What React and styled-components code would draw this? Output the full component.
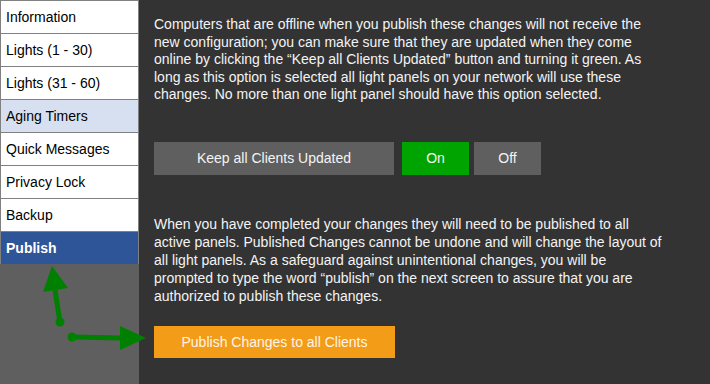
import styled, { createGlobalStyle } from "styled-components";

const GlobalStyle = createGlobalStyle`
    html, body {
        margin: 0;
        padding: 0;
        background: #333333;
    }
    #root {
        width: 710px;
        height: 384px;
    }
`;

const menu = [
    { label: "Information" },
    { label: "Lights (1 - 30)" },
    { label: "Lights (31 - 60)" },
    { label: "Aging Timers", hover: true },
    { label: "Quick Messages" },
    { label: "Privacy Lock" },
    { label: "Backup" },
    { label: "Publish", active: true },
];

const intro = [
    "Computers that are offline when you publish these changes will not receive the",
    "new configuration; you can make sure that they are updated when they come",
    "online by clicking the \u201CKeep all Clients Updated\u201D button and turning it green. As",
    "long as this option is selected all light panels on your network will use these",
    "changes. No more than one light panel should have this option selected.",
];

const warning = [
    "When you have completed your changes they will need to be published to all",
    "active panels. Published Changes cannot be undone and will change the layout of",
    "all light panels. As a safeguard against unintentional changes, you will be",
    "prompted to type the word \u201Cpublish\u201D on the next screen to assure that you are",
    "authorized to publish these changes.",
];

export default function App() {
    return (
        <>
            <GlobalStyle />
            <SCPage>
                <SCSidebar>
                    {menu.map((item) => (
                        <SCMenuItem key={item.label} $hover={item.hover} $active={item.active}>
                            {item.label}
                        </SCMenuItem>
                    ))}
                </SCSidebar>
                <SCMain>
                    <SCText $lh="17.5px">
                        {intro.map((line) => (
                            <span key={line}>{line}</span>
                        ))}
                    </SCText>
                    <SCButtonRow>
                        <SCButton $w="240px">Keep all Clients Updated</SCButton>
                        <SCButton $w="67px" $bg="#00a400" $ml="8px">On</SCButton>
                        <SCButton $w="67px" $ml="5px">Off</SCButton>
                    </SCButtonRow>
                    <SCText $lh="18px" $mt="40px">
                        {warning.map((line) => (
                            <span key={line}>{line}</span>
                        ))}
                    </SCText>
                    <SCPublishButton>Publish Changes to all Clients</SCPublishButton>
                </SCMain>
                <SCArrows width="160" height="110" viewBox="0 0 160 110">
                    <line x1="60" y1="62" x2="55" y2="30" stroke="#008000" strokeWidth="5" />
                    <circle cx="60" cy="62" r="4.5" fill="#008000" />
                    <polygon points="52,6 43,32 68,28" fill="#008000" />
                    <line x1="72" y1="77" x2="122" y2="78" stroke="#008000" strokeWidth="5" />
                    <circle cx="72" cy="77" r="4.5" fill="#008000" />
                    <polygon points="146,78 120,66 120,90" fill="#008000" />
                </SCArrows>
            </SCPage>
        </>
    );
}

const SCPage = styled.div`
    position: relative;
    display: flex;
    width: 710px;
    height: 384px;
    background: #333333;
    font-family: "Liberation Sans", Arial, sans-serif;
    overflow: hidden;
`;

const SCSidebar = styled.div`
    display: flex;
    flex-direction: column;
    width: 139px;
    flex-shrink: 0;
    height: 100%;
    background: #5f5f5f;
    box-sizing: border-box;
`;

const SCMenuItem = styled.div`
    height: 33px;
    box-sizing: border-box;
    border-top: 1px solid #808080;
    border-left: 1px solid #808080;
    border-right: 1px solid #808080;
    padding-left: 5px;
    display: flex;
    align-items: center;
    font-size: 14px;
    color: ${(p) => (p.$active ? "#ffffff" : "#000000")};
    font-weight: ${(p) => (p.$active ? "bold" : "normal")};
    background: ${(p) => (p.$active ? "#2e5597" : p.$hover ? "#d6e0f0" : "#ffffff")};
`;

const SCMain = styled.div`
    display: flex;
    flex-direction: column;
    align-items: flex-start;
    padding: 16px 0 0 15px;
`;

const SCText = styled.div`
    display: flex;
    flex-direction: column;
    margin-top: ${(p) => p.$mt || "0"};
    font-size: 14px;
    line-height: ${(p) => p.$lh};
    color: #f4f4f4;
    white-space: nowrap;
`;

const SCButtonRow = styled.div`
    display: flex;
    margin-top: 38px;
`;

const SCButton = styled.div`
    width: ${(p) => p.$w};
    height: 33px;
    margin-left: ${(p) => p.$ml || "0"};
    display: flex;
    align-items: center;
    justify-content: center;
    background: ${(p) => p.$bg || "#5f5f5f"};
    color: #f4f4f4;
    font-size: 14px;
`;

const SCPublishButton = styled.div`
    width: 241px;
    height: 32px;
    margin-top: 21px;
    display: flex;
    align-items: center;
    justify-content: center;
    background: #f39c18;
    color: #fff4e8;
    font-size: 14px;
`;

const SCArrows = styled.svg`
    position: absolute;
    left: 0;
    top: 260px;
`;
